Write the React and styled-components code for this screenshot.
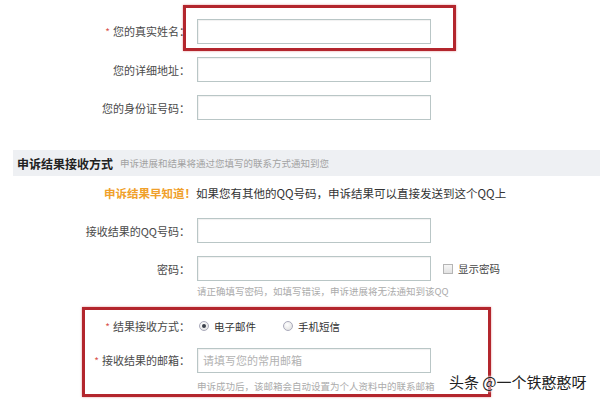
import React from "react";
import styled, { createGlobalStyle } from "styled-components";

const Global = createGlobalStyle`
  html, body {
    margin: 0;
    background: #fff;
  }
  body {
    font-family: "Noto Sans CJK SC", "Noto Sans", sans-serif;
    color: #444;
  }
`;

const Page = styled("div")`
  position: relative;
  width: 600px;
  height: 400px;
  overflow: hidden;
  padding-top: 19px;
  box-sizing: border-box;
`;

const Row = styled("div")`
  display: flex;
  align-items: center;
  height: ${(p) => p.$h || 25}px;
  margin-top: ${(p) => p.$mt || 0}px;
`;

const Label = styled("label")`
  flex: 0 0 ${(p) => p.$w || 190}px;
  text-align: right;
  font-size: 11px;
  line-height: 14px;
  color: #4a4a4a;
  white-space: nowrap;
`;

const Star = styled("span")`
  color: #d9534f;
  margin-right: 3px;
  font-size: 10px;
`;

const Field = styled("div")`
  position: relative;
  margin-left: 7px;
  width: 234px;
  height: 25px;
  box-sizing: border-box;
  border: 1px solid #b9c6c6;
  box-shadow: inset 1px 1px 1px rgba(0, 0, 0, 0.06);
  background: #fff;
  font-size: 11px;
  line-height: 23px;
  padding-left: 5px;
  color: #b2b2b2;
`;

const Mark = styled("div")`
  position: absolute;
  left: -15px;
  top: -15px;
  width: 273px;
  height: 46px;
  box-sizing: border-box;
  border: 3px solid #b3262d;
  box-shadow: 0 0 2px rgba(200, 40, 45, 0.5);
  pointer-events: none;
`;

const SectionBar = styled("div")`
  display: flex;
  align-items: center;
  margin: 30px 0 0 13px;
  height: 26px;
  padding-left: 4px;
  background: #eef0f3;
`;

const SectionTitle = styled("span")`
  font-size: 12px;
  font-weight: 700;
  color: #222;
  margin-right: 7px;
`;

const SectionNote = styled("span")`
  font-size: 9.5px;
  color: #a2a2a2;
`;

const Notice = styled("div")`
  margin-top: 7px;
  height: 20px;
  line-height: 20px;
  padding-left: 104px;
  font-size: 11.5px;
  color: #333;
  white-space: nowrap;
`;

const Accent = styled("span")`
  color: #f0a02a;
  font-weight: 700;
`;

const Hint = styled("div")`
  margin-top: ${(p) => p.$mt || 3}px;
  padding-left: ${(p) => p.$pl || 197}px;
  height: 14px;
  line-height: 14px;
  font-size: 9.5px;
  color: #ababab;
  white-space: nowrap;
`;

const Check = styled("span")`
  display: inline-block;
  width: 8px;
  height: 8px;
  margin: 0 5px 0 12px;
  border: 1px solid #b5b5b5;
  background: linear-gradient(#f6f6f6, #e2e2e2);
`;

const CheckText = styled("span")`
  font-size: 10.5px;
  color: #444;
`;

const Box = styled("div")`
  margin: 9px 0 0 82px;
  width: 409px;
  height: 90px;
  box-sizing: border-box;
  border: 3px solid #b3262d;
  box-shadow: 0 0 2px rgba(200, 40, 45, 0.5);
  padding-top: 6px;
`;

const Radio = styled("span")`
  position: relative;
  display: inline-block;
  width: 8px;
  height: 8px;
  border-radius: 50%;
  border: 1px solid #aab;
  background: radial-gradient(circle at 40% 35%, #fff, #dcdcdc);
  margin: 0 5px 0 ${(p) => p.$ml}px;
  &::after {
    content: "";
    display: ${(p) => (p.$on ? "block" : "none")};
    position: absolute;
    left: 2px;
    top: 2px;
    width: 4px;
    height: 4px;
    border-radius: 50%;
    background: #3a3f4a;
  }
`;

const Option = styled("span")`
  font-size: 10.5px;
  color: #333;
`;

const Watermark = styled("div")`
  position: absolute;
  left: 449px;
  top: 372px;
  font-size: 15px;
  line-height: 20px;
  color: #222;
  white-space: nowrap;
  text-shadow: 0 0 2px #fff, 0 0 2px #fff, 0 0 3px #fff;
`;

const Req = ({ children }) => (
  <>
    <Star>*</Star>
    {children}
  </>
);

export default function App() {
  return (
    <Page>
      <Global />
      <Row>
        <Label>
          <Req>您的真实姓名：</Req>
        </Label>
        <Field>
          <Mark />
        </Field>
      </Row>
      <Row $mt={13}>
        <Label>您的详细地址：</Label>
        <Field />
      </Row>
      <Row $mt={13}>
        <Label>您的身份证号码：</Label>
        <Field />
      </Row>

      <SectionBar>
        <SectionTitle>申诉结果接收方式</SectionTitle>
        <SectionNote>申诉进展和结果将通过您填写的联系方式通知到您</SectionNote>
      </SectionBar>

      <Notice>
        <Accent>申诉结果早知道！</Accent>如果您有其他的QQ号码，申诉结果可以直接发送到这个QQ上
      </Notice>

      <Row $mt={15}>
        <Label>接收结果的QQ号码：</Label>
        <Field />
      </Row>
      <Row $mt={13}>
        <Label>密码：</Label>
        <Field />
        <Check />
        <CheckText>显示密码</CheckText>
      </Row>
      <Hint>请正确填写密码，如填写错误，申诉进展将无法通知到该QQ</Hint>

      <Box>
        <Row $h={20}>
          <Label $w={105}>
            <Req>结果接收方式：</Req>
          </Label>
          <Radio $ml={9} $on />
          <Option>电子邮件</Option>
          <Radio $ml={27} />
          <Option>手机短信</Option>
        </Row>
        <Row $mt={12}>
          <Label $w={105}>
            <Req>接收结果的邮箱：</Req>
          </Label>
          <Field>请填写您的常用邮箱</Field>
        </Row>
        <Hint $mt={6} $pl={112}>
          申诉成功后，该邮箱会自动设置为个人资料中的联系邮箱
        </Hint>
      </Box>

      <Watermark>头条 @一个铁憨憨呀</Watermark>
    </Page>
  );
}
